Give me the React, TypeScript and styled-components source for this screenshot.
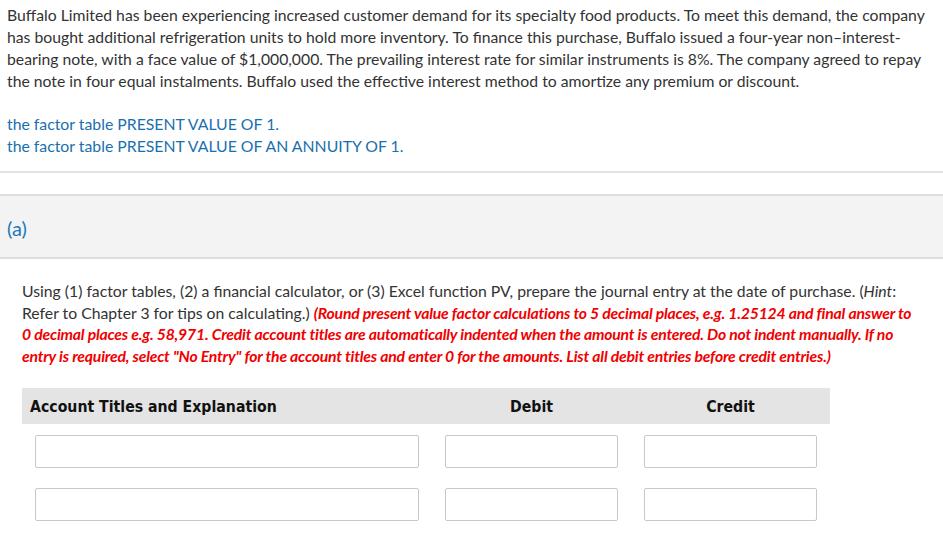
import React from "react";
import styled, { createGlobalStyle } from "styled-components";

const Global = createGlobalStyle`
  html, body { margin: 0; padding: 0; background: #fff; }
  body { font-family: Lato, "Open Sans", sans-serif; color: #333; }
  * { box-sizing: border-box; }
`;

const Page = styled.div`
  width: 943px;
  display: flex;
  flex-direction: column;
`;

const Intro = styled.p`
  margin: 0;
  padding: 4px 7px 0 7px;
  font-size: 15.75px;
  line-height: 22px;
  color: #333;
`;

const Links = styled.div`
  display: flex;
  flex-direction: column;
  padding: 21px 7px 0 7px;
`;

const FactorLink = styled.a`
  font-size: 15.8px;
  line-height: 22px;
  color: #1a6fae;
  text-decoration: none;
`;

const Divider = styled.div`
  margin-top: 14px;
  height: 23px;
  border-top: 2px solid #e2e2e2;
`;

const PartBand = styled.div`
  height: 65px;
  background: #f3f3f3;
  border-top: 2px solid #dddddd;
  border-bottom: 2px solid #dddddd;
  display: flex;
  align-items: center;
  padding: 3px 7px 0 7px;
`;

const PartLabel = styled.span`
  font-size: 20px;
  color: #1a7ab8;
`;

const Question = styled.p`
  margin: 0;
  padding: 21px 22px 0 22px;
  font-size: 15.75px;
  line-height: 21.5px;
  color: #333;
`;

const Instr = styled.span`
  color: #f00000;
  font-style: italic;
  font-weight: 700;
  letter-spacing: -0.2px;
`;

const Table = styled.div`
  margin: 22px 0 0 22px;
  display: grid;
  grid-template-columns: 410px 199px 199px;
  width: 808px;
`;

const HeadCell = styled.div<{ $align: "left" | "center" }>`
  height: 36px;
  background: #e4e4e4;
  display: flex;
  align-items: center;
  justify-content: ${(p) => (p.$align === "left" ? "flex-start" : "center")};
  padding-left: ${(p) => (p.$align === "left" ? "8px" : "0")};
  font-family: "DejaVu Sans Condensed", "DejaVu Sans", sans-serif;
  font-weight: 700;
  font-size: 15.7px;
  color: #111;
`;

const InputCell = styled.div`
  padding: 11px 13px 0 13px;
  height: 53px;
`;

const Field = styled.input`
  display: block;
  width: 100%;
  height: 33px;
  border: 1px solid #c8c8c8;
  border-radius: 2px;
  background: #fff;
  outline: none;
`;

const rows = [0, 1];

export default function App() {
  return (
    <>
      <Global />
      <Page>
        <Intro>
          Buffalo Limited has been experiencing increased customer demand for its specialty food products. To meet this
          demand, the company has bought additional refrigeration units to hold more inventory. To finance this purchase,
          Buffalo issued a four-year non–interest-bearing note, with a face value of $1,000,000. The prevailing interest
          rate for similar instruments is 8%. The company agreed to repay the note in four equal instalments. Buffalo used
          the effective interest method to amortize any premium or discount.
        </Intro>
        <Links>
          <FactorLink href="#">the factor table PRESENT VALUE OF 1.</FactorLink>
          <FactorLink href="#">the factor table PRESENT VALUE OF AN ANNUITY OF 1.</FactorLink>
        </Links>
        <Divider />
        <PartBand>
          <PartLabel>(a)</PartLabel>
        </PartBand>
        <Question>
          Using (1) factor tables, (2) a financial calculator, or (3) Excel function PV, prepare the journal entry at the
          date of purchase. (<i>Hint</i>: Refer to Chapter 3 for tips on calculating.){" "}
          <Instr>
            (Round present value factor calculations to 5 decimal places, e.g. 1.25124 and final answer to 0 decimal
            places e.g. 58,971. Credit account titles are automatically indented when the amount is entered. Do not
            indent manually. If no entry is required, select "No Entry" for the account titles and enter 0 for the
            amounts. List all debit entries before credit entries.)
          </Instr>
        </Question>
        <Table>
          <HeadCell $align="left">Account Titles and Explanation</HeadCell>
          <HeadCell $align="center">Debit</HeadCell>
          <HeadCell $align="center">Credit</HeadCell>
          {rows.map((r) => (
            <React.Fragment key={r}>
              <InputCell>
                <Field type="text" />
              </InputCell>
              <InputCell>
                <Field type="text" />
              </InputCell>
              <InputCell>
                <Field type="text" />
              </InputCell>
            </React.Fragment>
          ))}
        </Table>
      </Page>
    </>
  );
}
